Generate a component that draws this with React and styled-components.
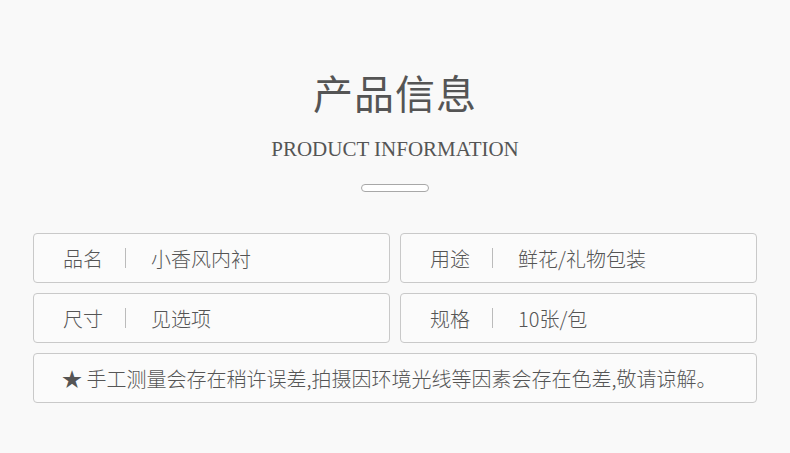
import React from "react";
import styled, { createGlobalStyle } from "styled-components";

const GlobalStyle = createGlobalStyle`
  html, body {
    margin: 0;
    padding: 0;
    background: #f9f9f9;
  }
  body {
    font-family: "Noto Sans CJK SC", "Noto Sans", sans-serif;
    color: #555;
  }
`;

const Page = styled.div`
  width: 790px;
  height: 453px;
  box-sizing: border-box;
  padding: 70px 33px 0;
  overflow: hidden;
`;

const Header = styled.div`
  display: flex;
  flex-direction: column;
  align-items: center;
`;

const Title = styled.h1`
  margin: 0;
  font-size: 40px;
  line-height: 44px;
  font-weight: 400;
  color: #555;
  letter-spacing: 1px;
`;

const SubTitle = styled.div`
  margin-top: 23px;
  font-family: "Liberation Serif", serif;
  font-size: 21px;
  line-height: 24px;
  color: #555;
`;

const Pill = styled.div`
  margin-top: 23px;
  width: 66px;
  height: 6px;
  border: 1px solid #a8a8a8;
  border-radius: 5px;
  background: #fff;
`;

const Grid = styled.div`
  margin-top: 41px;
  display: grid;
  grid-template-columns: 1fr 1fr;
  gap: 10px 10px;
`;

const Card = styled.div`
  grid-column: ${(p) => (p.$wide ? "1 / span 2" : "auto")};
  height: 50px;
  box-sizing: border-box;
  border: 1px solid #c9c9c9;
  border-radius: 4px;
  background: #fbfbfb;
  display: flex;
  align-items: center;
  padding-left: ${(p) => (p.$wide ? "28px" : "29px")};
  font-size: 20px;
  font-weight: 300;
  color: #555;
`;

const Label = styled.span`
  width: 40px;
`;

const Divider = styled.span`
  width: 1px;
  height: 20px;
  background: #bbb;
  margin: 0 25px 0 22px;
`;

const Value = styled.span``;

const Note = styled.span`
  white-space: nowrap;
`;

const items = [
  ["品名", "小香风内衬"],
  ["用途", "鲜花/礼物包装"],
  ["尺寸", "见选项"],
  ["规格", "10张/包"],
];

export default function App() {
  return (
    <>
      <GlobalStyle />
      <Page>
        <Header>
          <Title>产品信息</Title>
          <SubTitle>PRODUCT INFORMATION</SubTitle>
          <Pill />
        </Header>
        <Grid>
          {items.map(([k, v]) => (
            <Card key={k}>
              <Label>{k}</Label>
              <Divider />
              <Value>{v}</Value>
            </Card>
          ))}
          <Card $wide>
            <Note>★ 手工测量会存在稍许误差,拍摄因环境光线等因素会存在色差,敬请谅解。</Note>
          </Card>
        </Grid>
      </Page>
    </>
  );
}
